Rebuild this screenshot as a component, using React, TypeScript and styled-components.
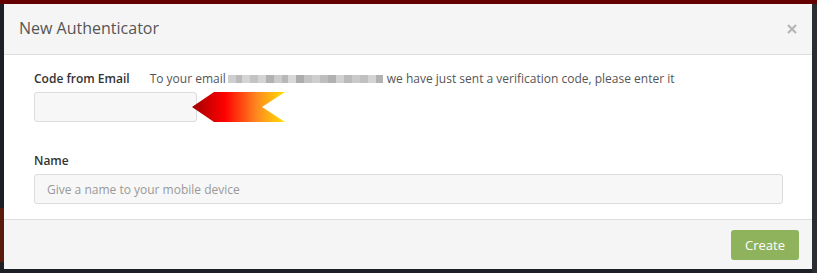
import React from "react";
import styled, { createGlobalStyle } from "styled-components";

const Global = createGlobalStyle`
  html, body { margin: 0; padding: 0; }
  body {
    width: 817px;
    height: 273px;
    overflow: hidden;
    font-family: "Open Sans", "Noto Sans", sans-serif;
    background:
      linear-gradient(#640000 0 4px, transparent 4px),
      linear-gradient(90deg, transparent 0 812px, #2a2e33 812px),
      linear-gradient(180deg, transparent 0 208px, #5c1a0c 208px 262px, transparent 262px),
      #1c2026;
  }
`;

const Backdrop = styled.div`
  padding: 4px 5px 4px 4px;
  box-sizing: border-box;
  width: 817px;
  height: 273px;
`;

const Modal = styled.div`
  width: 808px;
  height: 265px;
  background: #fff;
  display: flex;
  flex-direction: column;
  box-sizing: border-box;
`;

const Header = styled.div`
  height: 51px;
  box-sizing: border-box;
  background: #f5f5f5;
  border-bottom: 1px solid #dedede;
  display: flex;
  align-items: center;
  justify-content: space-between;
  padding: 0 13px 0 15px;
`;

const Title = styled.h4`
  margin: 0;
  font-size: 16px;
  font-weight: 400;
  color: #555;
  padding-bottom: 2px;
`;

const Close = styled.button`
  border: 0;
  background: none;
  padding: 0;
  width: 14px;
  height: 14px;
  display: flex;
  align-items: center;
  justify-content: center;
  cursor: pointer;
`;

const Body = styled.div`
  padding: 15px 29px 15px 30px;
  display: flex;
  flex-direction: column;
  box-sizing: border-box;
  height: 164px;
`;

const LabelRow = styled.div`
  display: flex;
  align-items: center;
  height: 17px;
  line-height: 17px;
  margin-bottom: 5px;
`;

const Label = styled.label`
  font-size: 12px;
  font-weight: 600;
  color: #333;
`;

const Hint = styled.span`
  font-size: 12px;
  color: #555;
  margin-left: 20px;
  display: flex;
  align-items: center;
  white-space: pre;
`;

const Blur = styled.span`
  display: inline-block;
  width: 155px;
  height: 8px;
  margin: 0 4px 0 2px;
  background:
    linear-gradient(90deg,
      #c9c9c9 0 8px, #b3b3b3 8px 14px, #d0d0d0 14px 22px, #bdbdbd 22px 30px,
      #cfcfcf 30px 38px, #a9a9a9 38px 46px, #c6c6c6 46px 54px, #b0b0b0 54px 60px,
      #d4d4d4 60px 68px, #a3a3a3 68px 76px, #bdbdbd 76px 84px, #c9c9c9 84px 92px,
      #b6b6b6 92px 100px, #a8a8a8 100px 108px, #cccccc 108px 116px, #b2b2b2 116px 124px,
      #c4c4c4 124px 132px, #b9b9b9 132px 140px, #cfcfcf 140px 148px, #a9a9a9 148px 155px);
  opacity: 0.9;
`;

const InputRow = styled.div`
  display: flex;
  align-items: center;
`;

const Input = styled.input<{ $width?: number }>`
  box-sizing: border-box;
  height: 30px;
  width: ${(p) => (p.$width ? `${p.$width}px` : "100%")};
  background: #f7f7f7;
  border: 1px solid #dcdcdc;
  border-radius: 3px;
  padding: 0 12px;
  font-family: "Open Sans", "Noto Sans", sans-serif;
  font-size: 12px;
  color: #555;
  outline: none;
  &::placeholder { color: #999; }
`;

const Arrow = styled.svg`
  margin-left: -5px;
  display: block;
`;

const Group = styled.div<{ $top?: number }>`
  margin-top: ${(p) => p.$top ?? 0}px;
  display: flex;
  flex-direction: column;
`;

const Footer = styled.div`
  flex: 1;
  background: #f5f5f5;
  border-top: 1px solid #dedede;
  display: flex;
  justify-content: flex-end;
  align-items: center;
  padding: 0 13px;
`;

const Button = styled.button`
  height: 30px;
  width: 68px;
  border: 0;
  border-radius: 3px;
  background: #8fb35c;
  color: #fff;
  font-family: "Open Sans", "Noto Sans", sans-serif;
  font-size: 13px;
  cursor: pointer;
  margin-top: 1px;
`;

export default function App() {
  return (
    <>
      <Global />
      <Backdrop>
        <Modal>
          <Header>
            <Title>New Authenticator</Title>
            <Close aria-label="Close">
              <svg width="10" height="10" viewBox="0 0 10 10">
                <path d="M1 1L9 9M9 1L1 9" stroke="#b5b5b5" strokeWidth="2.2" />
              </svg>
            </Close>
          </Header>
          <Body>
            <Group>
              <LabelRow>
                <Label>Code from Email</Label>
                <Hint>
                  To your email<Blur />we have just sent a verification code, please enter it
                </Hint>
              </LabelRow>
              <InputRow>
                <Input $width={163} />
                <Arrow width="93" height="30" viewBox="0 0 93 30">
                  <defs>
                    <linearGradient id="ag" x1="0" x2="1" y1="0" y2="0">
                      <stop offset="0" stopColor="#a00000" />
                      <stop offset="0.35" stopColor="#ff0000" />
                      <stop offset="0.7" stopColor="#ff8a20" />
                      <stop offset="1" stopColor="#ffe000" />
                    </linearGradient>
                  </defs>
                  <polygon points="0,15 22,0 93,0 70,15 93,30 22,30" fill="url(#ag)" />
                </Arrow>
              </InputRow>
            </Group>
            <Group $top={30}>
              <LabelRow>
                <Label>Name</Label>
              </LabelRow>
              <Input placeholder="Give a name to your mobile device" />
            </Group>
          </Body>
          <Footer>
            <Button>Create</Button>
          </Footer>
        </Modal>
      </Backdrop>
    </>
  );
}
